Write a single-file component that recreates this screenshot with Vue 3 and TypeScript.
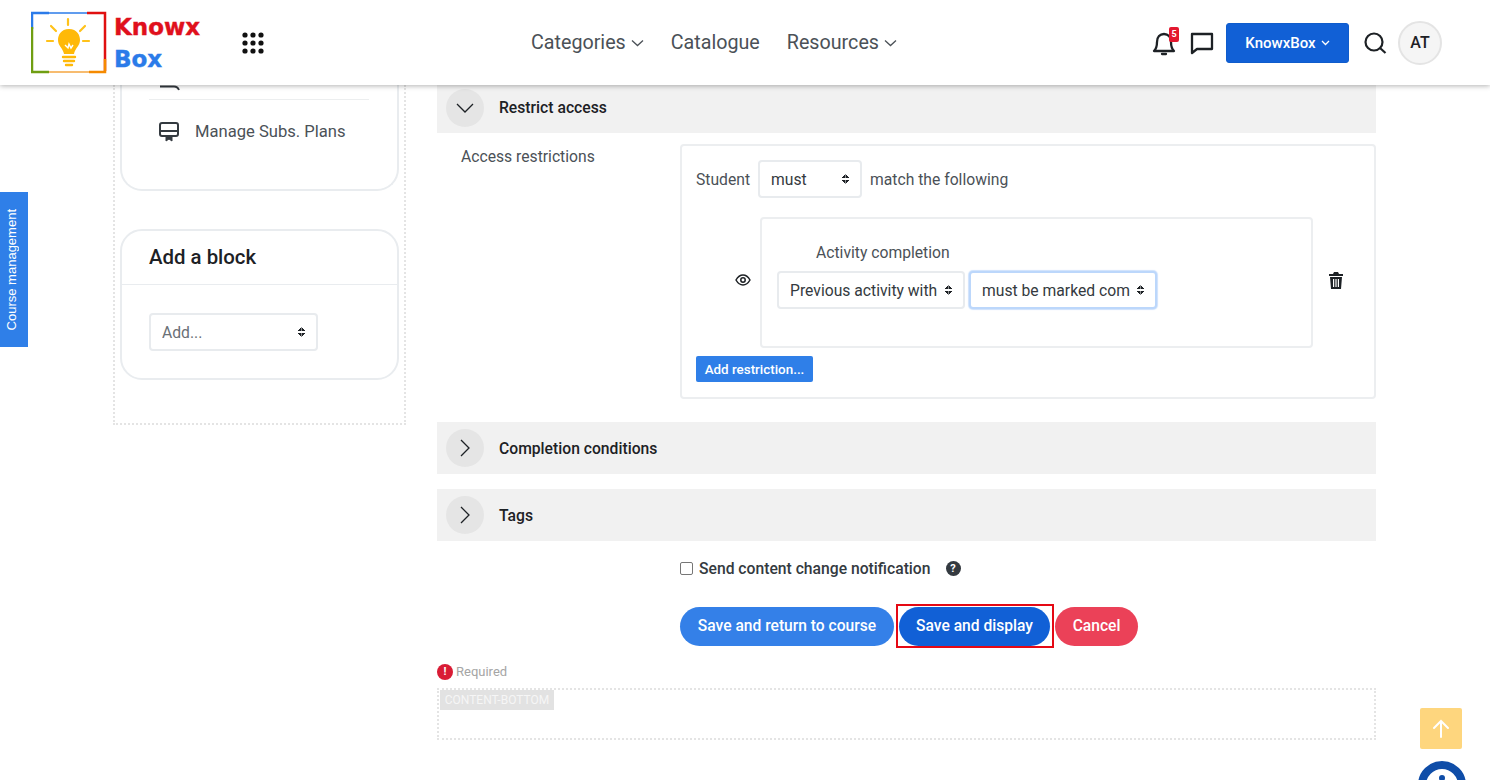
<template>
  <div class="page">
    <header class="topbar">
      <div class="brand">
        <div class="logo">
          <svg width="76" height="64" viewBox="0 0 76 64" fill="none">
            <path d="M1 18V2H18" stroke="#2b7be9" stroke-width="2.5" />
            <path d="M18 2H56" stroke="#2b7be9" stroke-width="1.5" />
            <path d="M56 2H74V60" stroke="#e01010" stroke-width="2.5" />
            <path d="M74 48V61H58" stroke="#f58a00" stroke-width="2.5" />
            <path d="M58 61H18" stroke="#f5a640" stroke-width="1.5" />
            <path d="M18 61H1V16" stroke="#6f9e12" stroke-width="2.5" />
            <g stroke="#ffc21a" stroke-width="2.2" stroke-linecap="round">
              <path d="M37 8V14M20 15L25 20M54 15L49 20M16 30H22M52 30H58" />
            </g>
            <path d="M38 18C30 18 27 24 27 29C27 35 32 37 33 43H43C44 37 49 35 49 29C49 24 46 18 38 18Z" fill="#ffb908" />
            <path d="M34 34L37 37L38 33L40 37L42 34" stroke="#fff" stroke-width="1.4" />
            <path d="M32 46H44M33 50H43M35 54H41" stroke="#ffb908" stroke-width="2.4" stroke-linecap="round" />
          </svg>
        </div>
        <div class="logo-text">
          <span class="logo-red">Knowx</span>
          <span class="logo-blue">Box</span>
        </div>
        <svg class="apps" width="22" height="22" viewBox="0 0 22 22" fill="#111">
          <template v-for="row in 3" :key="row">
            <circle v-for="col in 3" :key="col" :cx="col * 8 - 5" :cy="row * 8 - 5" r="2.6" />
          </template>
        </svg>
      </div>

      <nav class="nav">
        <a v-for="item in navItems" :key="item.label" class="nav-item">
          {{ item.label }}
          <svg v-if="item.caret" width="13" height="8" viewBox="0 0 13 8" fill="none" stroke="#4b5157" stroke-width="1.3">
            <path d="M1 1.500L6.500 6.500L12 1.500" />
          </svg>
        </a>
      </nav>

      <div class="actions">
        <div class="bell">
          <svg width="26" height="28" viewBox="0 0 26 28" fill="none" stroke="#1d2125" stroke-width="2.300">
            <path d="M3 22C5 20 6 18 6 13C6 8 9 5 13 5C17 5 20 8 20 13C20 18 21 20 23 22Z" stroke-linejoin="round" />
            <path d="M11 25H15" stroke-linecap="round" />
          </svg>
          <span class="badge">5</span>
        </div>
        <svg width="24" height="24" viewBox="0 0 24 24" fill="none" stroke="#1d2125" stroke-width="2.300">
          <path d="M2 3H22V18H7L2 22Z" stroke-linejoin="round" />
        </svg>
        <button class="btn-brand">
          KnowxBox
          <svg width="9" height="6" viewBox="0 0 9 6" fill="none" stroke="#fff" stroke-width="1.3">
            <path d="M1 1L4.500 4.500L8 1" />
          </svg>
        </button>
        <svg class="search" width="24" height="24" viewBox="0 0 24 24" fill="none" stroke="#1d2125" stroke-width="2.200">
          <circle cx="11" cy="11" r="8.500" />
          <path d="M17 17L22.500 22" />
        </svg>
        <div class="avatar">AT</div>
      </div>
    </header>

    <div class="course-tab"><span>Course management</span></div>

    <div class="layout">
      <aside class="sidebar">
        <section class="card card-nav">
          <div class="cut-icon">
            <svg width="22" height="6" viewBox="0 0 22 6" fill="none" stroke="#343a40" stroke-width="1.800">
              <path d="M1 1.500H15C17 1.500 19 2.500 20 5" />
            </svg>
          </div>
          <div class="nav-row">
            <svg width="22" height="22" viewBox="0 0 22 22" fill="none" stroke="#343a40" stroke-width="2">
              <rect x="2" y="2" width="18" height="13" rx="2" />
              <path d="M2 10H20" />
              <path d="M8 16V20L11 18L14 20V16" fill="#343a40" stroke-width="1" />
            </svg>
            Manage Subs. Plans
          </div>
        </section>
        <section class="card card-block">
          <h3>Add a block</h3>
          <div class="card-body">
            <div class="select select-add">
              <span>Add...</span>
              <i class="updown"></i>
            </div>
          </div>
        </section>
      </aside>

      <main class="content">
        <div class="section-bar bar-open">
          <span class="round">
            <svg width="18" height="10" viewBox="0 0 18 10" fill="none" stroke="#1d2125" stroke-width="1.300">
              <path d="M1 1L9 9L17 1" />
            </svg>
          </span>
          Restrict access
        </div>

        <div class="restrict">
          <div class="field-label">Access restrictions</div>
          <div class="rule-box">
            <div class="rule-head">
              Student
              <div class="select select-must"><span>must</span><i class="updown"></i></div>
              match the following
            </div>
            <div class="rule-row">
              <svg class="eye" width="16" height="14" viewBox="0 0 16 14" fill="none" stroke="#1d2125" stroke-width="1.500">
                <path d="M1 7C3 3.500 5.500 2 8 2C10.500 2 13 3.500 15 7C13 10.500 10.500 12 8 12C5.500 12 3 10.500 1 7Z" />
                <circle cx="8" cy="7" r="2.200" />
              </svg>
              <div class="rule-inner">
                <div class="rule-title">Activity completion</div>
                <div class="rule-selects">
                  <div class="select select-prev"><span>Previous activity with</span><i class="updown"></i></div>
                  <div class="select select-mark"><span>must be marked com</span><i class="updown"></i></div>
                </div>
              </div>
              <svg class="trash" width="14" height="17" viewBox="0 0 14 17" fill="#1d2125">
                <path d="M5 0H9L10 2H14V4H0V2H4Z" />
                <path d="M1 5H13L12 17H2ZM4 7V15H5.200V7ZM6.400 7V15H7.600V7ZM8.800 7V15H10V7Z" fill-rule="evenodd" />
              </svg>
            </div>
            <button class="btn-restriction">Add restriction...</button>
          </div>
        </div>

        <div v-for="bar in closedBars" :key="bar" class="section-bar bar-closed">
          <span class="round">
            <svg width="10" height="18" viewBox="0 0 10 18" fill="none" stroke="#1d2125" stroke-width="1.300">
              <path d="M1 1L9 9L1 17" />
            </svg>
          </span>
          {{ bar }}
        </div>

        <div class="notify">
          <span class="check"></span>
          Send content change notification
          <span class="help">?</span>
        </div>

        <div class="buttons">
          <button class="pill pill-blue">Save and return to course</button>
          <div class="highlight"><button class="pill pill-dark">Save and display</button></div>
          <button class="pill pill-red">Cancel</button>
        </div>

        <div class="required"><span class="req-icon">!</span>Required</div>

        <div class="content-bottom"><span>CONTENT-BOTTOM</span></div>
      </main>
    </div>

    <button class="to-top">
      <svg width="18" height="20" viewBox="0 0 18 20" fill="none" stroke="#fff" stroke-width="2" stroke-linecap="round">
        <path d="M9 18V2M2 9L9 2L16 9" />
      </svg>
    </button>
    <div class="info-btn"><i></i></div>
  </div>
</template>

<script setup lang="ts">
const navItems = [
  { label: 'Categories', caret: true },
  { label: 'Catalogue', caret: false },
  { label: 'Resources', caret: true },
];

const closedBars = ['Completion conditions', 'Tags'];
</script>

<style>
html,
body {
  margin: 0;
  height: 100%;
  overflow: hidden;
  background: #fff;
}
</style>

<style scoped>
.page {
  position: relative;
  height: 780px;
  overflow: hidden;
  font-family: Roboto, "Liberation Sans", sans-serif;
  color: #4b5157;
  font-size: 15.7px;
}

.topbar {
  position: relative;
  z-index: 2;
  display: flex;
  align-items: center;
  height: 85px;
  background: #fff;
  box-shadow: 0 1px 5px rgba(0, 0, 0, 0.3);
}

.brand {
  display: flex;
  align-items: center;
  width: 531px;
  padding-left: 31px;
  box-sizing: border-box;
}

.logo {
  display: flex;
  width: 76px;
  height: 64px;
}

.logo-text {
  display: flex;
  flex-direction: column;
  margin-left: 7px;
  font-family: "DejaVu Sans", sans-serif;
  font-weight: 700;
  font-size: 23px;
  line-height: 32px;
  -webkit-text-stroke: 0.4px currentColor;
}

.logo-red {
  color: #e0101c;
}

.logo-blue {
  color: #2b7be9;
}

.apps {
  margin-left: 42px;
}

.nav {
  display: flex;
  gap: 27px;
  font-size: 19.7px;
}

.nav-item {
  display: flex;
  align-items: center;
  gap: 5px;
}

.actions {
  display: flex;
  align-items: center;
  margin-left: auto;
  padding-right: 48px;
}

.bell {
  position: relative;
  display: flex;
  margin-right: 13px;
}

.badge {
  position: absolute;
  top: -2px;
  left: 18px;
  width: 10px;
  height: 15px;
  background: #e3182f;
  border-radius: 2px;
  color: #fff;
  font-size: 9px;
  font-weight: 700;
  line-height: 15px;
  text-align: center;
}

.btn-brand {
  display: flex;
  align-items: center;
  justify-content: center;
  gap: 5px;
  width: 123px;
  height: 40px;
  margin-left: 12px;
  background: #1160d6;
  border: 1px solid #0f5ccc;
  border-radius: 3px;
  color: #fff;
  font-family: inherit;
  font-size: 15px;
  font-weight: 500;
}

.search {
  margin-left: 14px;
}

.avatar {
  display: flex;
  align-items: center;
  justify-content: center;
  width: 40px;
  height: 40px;
  margin-left: 11px;
  background: #f5f5f5;
  border: 2px solid #e4e4e4;
  border-radius: 50%;
  color: #1d2125;
  font-size: 16px;
  font-weight: 500;
}

.course-tab {
  position: absolute;
  z-index: 1;
  top: 192px;
  left: 0;
  display: flex;
  align-items: center;
  justify-content: center;
  box-sizing: border-box;
  width: 28px;
  height: 155px;
  padding-right: 6px;
  background: #2f7fe8;
  color: #fff;
  font-family: "Liberation Sans", sans-serif;
  font-size: 13px;
}

.course-tab span {
  writing-mode: vertical-rl;
  transform: rotate(180deg);
  white-space: nowrap;
}

.layout {
  display: flex;
  align-items: flex-start;
  gap: 31px;
  padding-left: 113px;
}

.sidebar {
  display: flex;
  flex-direction: column;
  gap: 38px;
  box-sizing: border-box;
  width: 293px;
  height: 340px;
  padding: 0 5px 0 5px;
  border: 2px dotted #e4e4e4;
  border-top: none;
}

.card {
  background: #fff;
  border: 2px solid #e9ecef;
  border-radius: 22px;
}

.card-nav {
  height: 106px;
  box-sizing: border-box;
  border-top: none;
  border-top-left-radius: 0;
  border-top-right-radius: 0;
  padding: 0 28px 0 27px;
}

.cut-icon {
  display: flex;
  align-items: flex-start;
  height: 14px;
  padding-left: 10px;
  border-bottom: 1px solid #eceeef;
}

.nav-row {
  display: flex;
  align-items: center;
  gap: 15px;
  padding: 21px 0 0 9px;
  font-size: 16.6px;
  line-height: 22px;
}

.card-block {
  height: 151px;
  box-sizing: border-box;
}

.card-block h3 {
  margin: 0;
  height: 54px;
  box-sizing: border-box;
  padding: 12px 27px 0;
  border-bottom: 1px solid #e9ecef;
  color: #1d2125;
  font-size: 20.4px;
  font-weight: 500;
  line-height: 28px;
}

.card-body {
  padding: 28px 27px 0;
}

.select {
  position: relative;
  display: flex;
  align-items: center;
  box-sizing: border-box;
  height: 38px;
  padding: 0 25px 0 11px;
  background: #fff;
  border: 2px solid #e8ebee;
  border-radius: 4px;
  color: #343a40;
  font-size: 15.7px;
  white-space: nowrap;
}

.select span {
  overflow: hidden;
}

.updown {
  position: absolute;
  top: 50%;
  right: 11px;
  width: 7px;
  height: 10px;
  margin-top: -5px;
  background:
    linear-gradient(to bottom right, transparent 50%, #1d2125 50%) left top / 50% 4px no-repeat,
    linear-gradient(to bottom left, transparent 50%, #1d2125 50%) right top / 50% 4px no-repeat,
    linear-gradient(to top right, transparent 50%, #1d2125 50%) left bottom / 50% 4px no-repeat,
    linear-gradient(to top left, transparent 50%, #1d2125 50%) right bottom / 50% 4px no-repeat;
}

.select-add {
  width: 169px;
  color: #6a7076;
}

.content {
  width: 939px;
}

.section-bar {
  display: flex;
  align-items: center;
  gap: 15px;
  box-sizing: border-box;
  padding-left: 9px;
  background: #f1f1f1;
  color: #1d2125;
  font-size: 15.7px;
  font-weight: 500;
}

.bar-open {
  height: 48px;
  padding-bottom: 3px;
}

.bar-closed {
  height: 52px;
  margin-bottom: 15px;
}

.round {
  display: flex;
  align-items: center;
  justify-content: center;
  width: 38px;
  height: 38px;
  background: #e5e5e5;
  border-radius: 50%;
}

.restrict {
  display: flex;
  padding: 11px 0 23px;
}

.field-label {
  width: 243px;
  padding: 3px 0 0 24px;
  box-sizing: border-box;
  line-height: 20px;
}

.rule-box {
  box-sizing: border-box;
  width: 696px;
  height: 255px;
  padding: 14px 15px 0 14px;
  border: 2px solid #eceef0;
  border-radius: 4px;
}

.rule-head {
  display: flex;
  align-items: center;
  gap: 8px;
}

.select-must {
  width: 104px;
}

.rule-row {
  display: flex;
  align-items: center;
  margin-top: 19px;
}

.eye {
  margin: 0 0 5px 39px;
}

.rule-inner {
  box-sizing: border-box;
  width: 553px;
  height: 131px;
  margin-left: 9px;
  padding: 24px 15px 0;
  border: 2px solid #eceef0;
  border-radius: 4px;
}

.rule-title {
  padding-left: 39px;
  line-height: 20px;
}

.rule-selects {
  display: flex;
  gap: 4px;
  margin-top: 8px;
}

.select-prev {
  width: 188px;
}

.select-mark {
  width: 188px;
  border-color: #bcd7fb;
  box-shadow: 0 0 1px 1px #cfe2fc;
}

.trash {
  margin: 0 0 5px 16px;
}

.btn-restriction {
  display: block;
  width: 117px;
  height: 26px;
  margin-top: 8px;
  padding: 0;
  background: #2f7fe8;
  border: none;
  border-radius: 2px;
  color: #fff;
  font-family: inherit;
  font-size: 13.4px;
  font-weight: 500;
}

.notify {
  display: flex;
  align-items: center;
  height: 24px;
  margin: 15px 0 0 243px;
  color: #343a40;
  font-weight: 500;
}

.check {
  box-sizing: border-box;
  width: 13px;
  height: 13px;
  margin-right: 6px;
  background: #fff;
  border: 1px solid #767676;
  border-radius: 2px;
}

.help {
  display: flex;
  align-items: center;
  justify-content: center;
  width: 15px;
  height: 15px;
  margin-left: 15px;
  background: #343a40;
  border-radius: 50%;
  color: #fff;
  font-size: 11px;
  font-weight: 700;
}

.buttons {
  display: flex;
  align-items: center;
  margin: 24px 0 0 243px;
}

.pill {
  height: 39px;
  padding: 0;
  border: none;
  border-radius: 20px;
  color: #fff;
  font-family: inherit;
  font-size: 15.6px;
  font-weight: 500;
}

.pill-blue {
  width: 214px;
  background: #3480e8;
}

.highlight {
  display: flex;
  box-sizing: border-box;
  height: 44px;
  margin: 0 1px 0 2px;
  padding: 0 2px 0 1px;
  align-items: center;
  border: 2px solid #e50914;
}

.pill-dark {
  width: 151px;
  background: #1160d6;
}

.pill-red {
  width: 83px;
  background: #eb4158;
}

.required {
  display: flex;
  align-items: center;
  gap: 3px;
  margin-top: 14px;
  color: #a5a5a5;
  font-size: 13px;
  line-height: 20px;
}

.req-icon {
  display: flex;
  align-items: center;
  justify-content: center;
  width: 16px;
  height: 16px;
  background: #d91c35;
  border-radius: 50%;
  color: #fff;
  font-size: 11px;
  font-weight: 700;
}

.content-bottom {
  box-sizing: border-box;
  height: 52px;
  margin-top: 6px;
  border: 2px dotted #e4e4e4;
}

.content-bottom span {
  display: block;
  width: 114px;
  height: 20px;
  margin: 0 1px;
  background: #e2e2e2;
  color: #f6f6f6;
  font-size: 12px;
  line-height: 20px;
  text-align: center;
}

.to-top {
  position: absolute;
  right: 28px;
  bottom: 31px;
  display: flex;
  align-items: center;
  justify-content: center;
  width: 42px;
  height: 41px;
  padding: 0;
  background: #fed67e;
  border: none;
  border-radius: 2px;
}

.info-btn {
  position: absolute;
  top: 761px;
  left: 1418px;
  box-sizing: border-box;
  width: 48px;
  height: 48px;
  background: #fff;
  border: 8px solid #0f4da8;
  border-radius: 50%;
}

.info-btn i {
  position: absolute;
  top: 6px;
  left: 13px;
  width: 6px;
  height: 6px;
  background: #0f4da8;
  border-radius: 50%;
}
</style>
